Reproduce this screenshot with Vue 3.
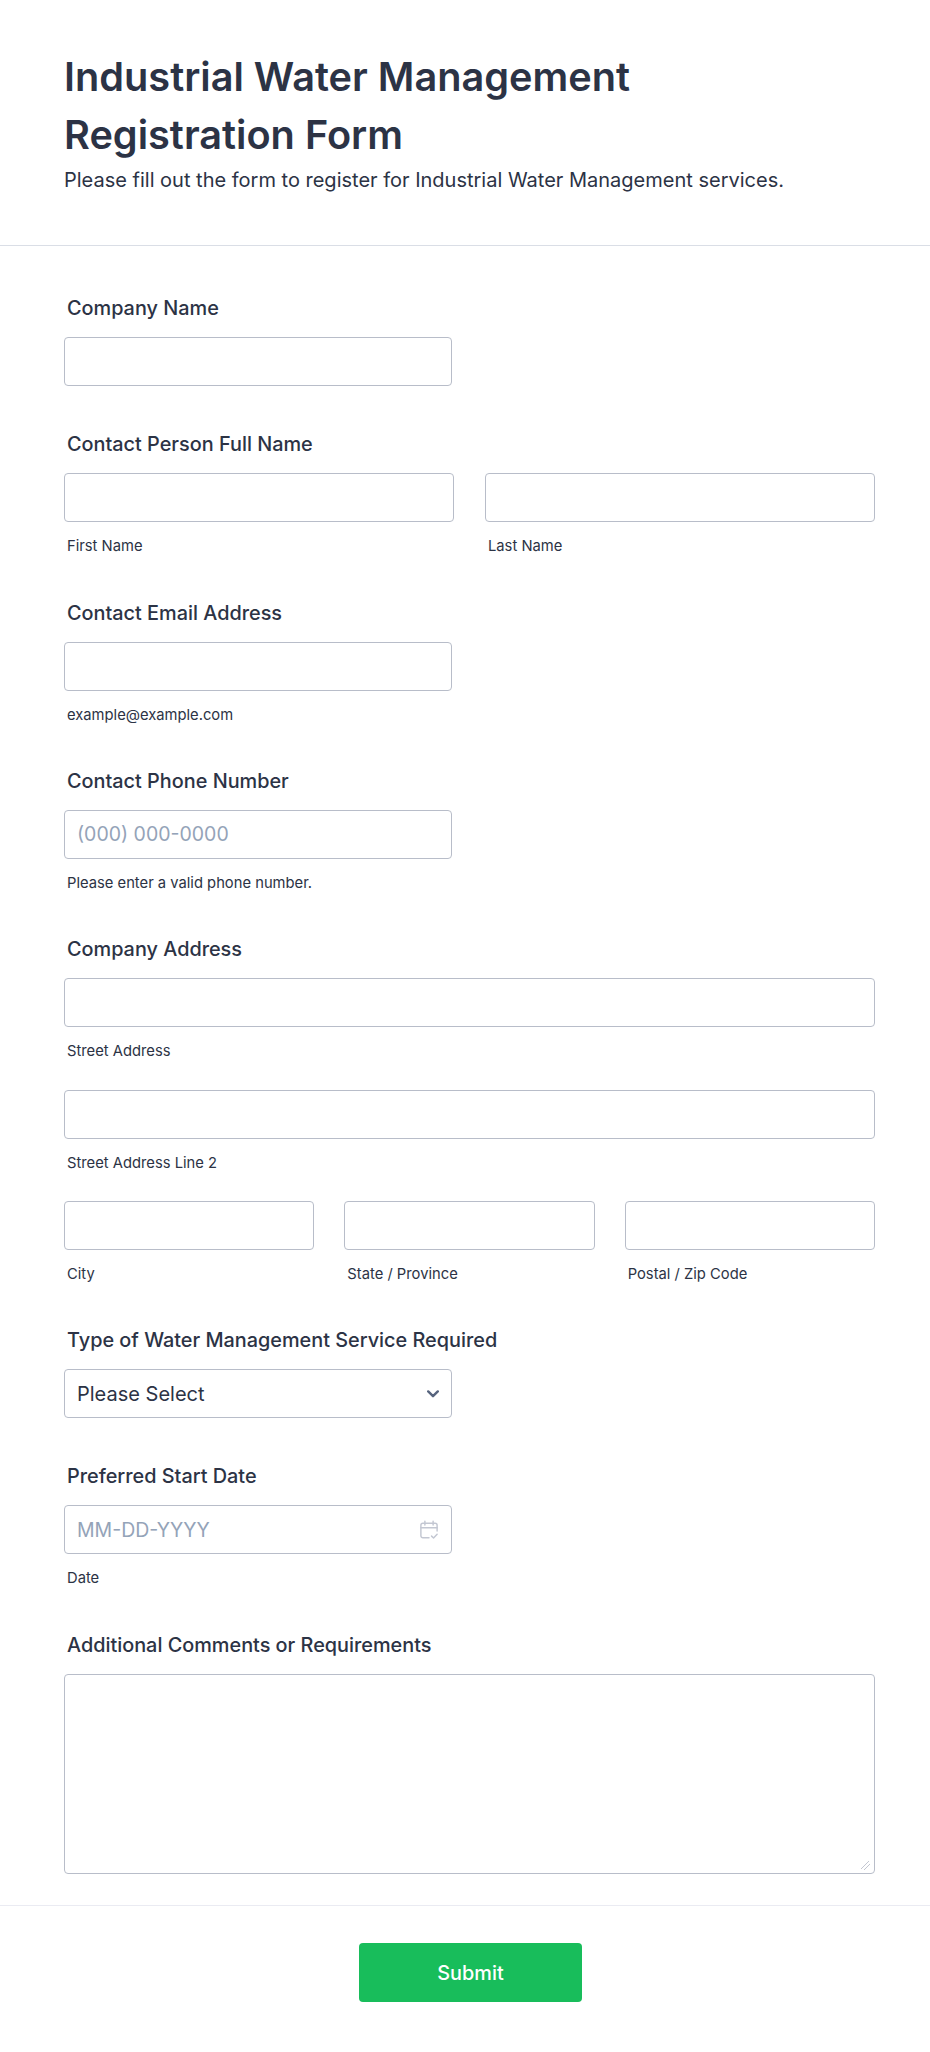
<template>
  <div class="form-page">
    <header class="form-header">
      <h1 class="form-title">Industrial Water Management Registration Form</h1>
      <p class="form-desc">Please fill out the form to register for Industrial Water Management services.</p>
    </header>

    <form class="form-body" @submit.prevent>
      <div class="field">
        <label class="field-label">Company Name</label>
        <input type="text" class="field-input short">
      </div>

      <div class="field">
        <label class="field-label">Contact Person Full Name</label>
        <div class="name-row">
          <div class="cell">
            <input type="text" class="field-input">
            <span class="sublabel">First Name</span>
          </div>
          <div class="cell">
            <input type="text" class="field-input">
            <span class="sublabel">Last Name</span>
          </div>
        </div>
      </div>

      <div class="field">
        <label class="field-label">Contact Email Address</label>
        <input type="email" class="field-input short">
        <span class="sublabel">example@example.com</span>
      </div>

      <div class="field">
        <label class="field-label">Contact Phone Number</label>
        <input type="tel" class="field-input short" placeholder="(000) 000-0000">
        <span class="sublabel">Please enter a valid phone number.</span>
      </div>

      <div class="field">
        <label class="field-label">Company Address</label>
        <div class="address-stack">
          <div class="cell">
            <input type="text" class="field-input">
            <span class="sublabel">Street Address</span>
          </div>
          <div class="cell">
            <input type="text" class="field-input">
            <span class="sublabel">Street Address Line 2</span>
          </div>
          <div class="city-row">
            <div v-for="part in cityParts" :key="part" class="cell">
              <input type="text" class="field-input">
              <span class="sublabel">{{ part }}</span>
            </div>
          </div>
        </div>
      </div>

      <div class="field">
        <label class="field-label">Type of Water Management Service Required</label>
        <div class="input-wrap short">
          <select class="field-input field-select">
            <option>Please Select</option>
          </select>
          <svg class="chevron" width="12" height="8" viewBox="0 0 12 8" fill="none">
            <path d="M1.200 1.400 6 6.200l4.800-4.800" stroke="#57647e" stroke-width="2.400" stroke-linecap="round" stroke-linejoin="round" />
          </svg>
        </div>
      </div>

      <div class="field">
        <label class="field-label">Preferred Start Date</label>
        <div class="input-wrap short">
          <input type="text" class="field-input" placeholder="MM-DD-YYYY">
          <svg class="calendar" width="20" height="20" viewBox="0 0 18 18" fill="none" stroke="#c3c7d2" stroke-width="1.300" stroke-linecap="round" stroke-linejoin="round">
            <path d="M9 16H3.500A1.800 1.800 0 0 1 1.700 14.200V4.800A1.800 1.800 0 0 1 3.500 3h11a1.800 1.800 0 0 1 1.800 1.800V10" />
            <path d="M1.700 7h14.600M5.300 1v3.500M12.700 1v3.500" />
            <path d="m11.300 14.500 1.800 1.700 3.200-3.400" />
          </svg>
        </div>
        <span class="sublabel">Date</span>
      </div>

      <div class="field">
        <label class="field-label">Additional Comments or Requirements</label>
        <textarea class="field-input field-textarea"></textarea>
      </div>
    </form>

    <footer class="form-footer">
      <button type="button" class="btn-submit">Submit</button>
    </footer>
  </div>
</template>

<script setup>
const cityParts = ['City', 'State / Province', 'Postal / Zip Code'];
</script>

<style>
html,
body {
  background: #fff;
}
</style>

<style scoped>
.form-page {
  width: 930px;
  height: 2052px;
  overflow: hidden;
  background: #fff;
  color: #2c3345;
  font-family: Inter, "Liberation Sans", sans-serif;
}

.form-header {
  height: 246px;
  padding: 48px 64px 0;
  box-sizing: border-box;
  border-bottom: 1px solid #dadee6;
}

.form-title {
  margin: 0;
  width: 640px;
  font-size: 39.700px;
  line-height: 58px;
  font-weight: 600;
}

.form-desc {
  margin: 1px 0 0;
  font-size: 20px;
  line-height: 30px;
  font-weight: 430;
}

.form-body {
  display: flex;
  flex-direction: column;
  gap: 45px;
  padding: 49.250px 55px 0 64px;
}

.field {
  display: flex;
  flex-direction: column;
  align-items: flex-start;
}

.field-label {
  margin: 0 0 16px 3px;
  font-size: 19.850px;
  line-height: 26px;
  font-weight: 450;
}

.field-input {
  display: block;
  width: 100%;
  height: 49px;
  box-sizing: border-box;
  padding: 0 12px;
  background: #fff;
  border: 1px solid #b8bdc9;
  border-radius: 4px;
  color: #2c3345;
  font-family: inherit;
  font-size: 20px;
}

.field-input::placeholder {
  color: #94a3b8;
  font-size: 19.500px;
  opacity: 1;
}

.short {
  width: 388px;
}

.sublabel {
  display: block;
  margin: 16px 0 0 3px;
  font-size: 14.750px;
  line-height: 16.250px;
}

.name-row {
  display: grid;
  grid-template-columns: 390px 390px;
  gap: 31px;
  width: 100%;
}

.address-stack {
  display: flex;
  flex-direction: column;
  gap: 30.250px;
  width: 100%;
}

.city-row {
  display: grid;
  grid-template-columns: repeat(3, 1fr);
  gap: 30px;
}

.input-wrap {
  position: relative;
}

.field-select {
  appearance: none;
}

.chevron {
  position: absolute;
  top: 21px;
  right: 13px;
}

.calendar {
  position: absolute;
  top: 15px;
  right: 13px;
}

.field-textarea {
  height: 200px;
  padding: 12px;
  resize: vertical;
}

.field-textarea::-webkit-resizer {
  background: linear-gradient(135deg, transparent 40%, #c3c7d2 40% 49%, transparent 49% 62%, #c3c7d2 62% 71%, transparent 71%) no-repeat 2px 3px / 9px 9px;
}

.form-footer {
  margin-top: 31.500px;
  padding-top: 37px;
  padding-left: 11px;
  border-top: 1px solid #eaebf2;
  display: flex;
  justify-content: center;
}

.btn-submit {
  width: 223px;
  height: 59px;
  background: #18bd5b;
  border: 0;
  border-radius: 4px;
  color: #fff;
  font-family: inherit;
  font-size: 19.850px;
  font-weight: 450;
}
</style>
